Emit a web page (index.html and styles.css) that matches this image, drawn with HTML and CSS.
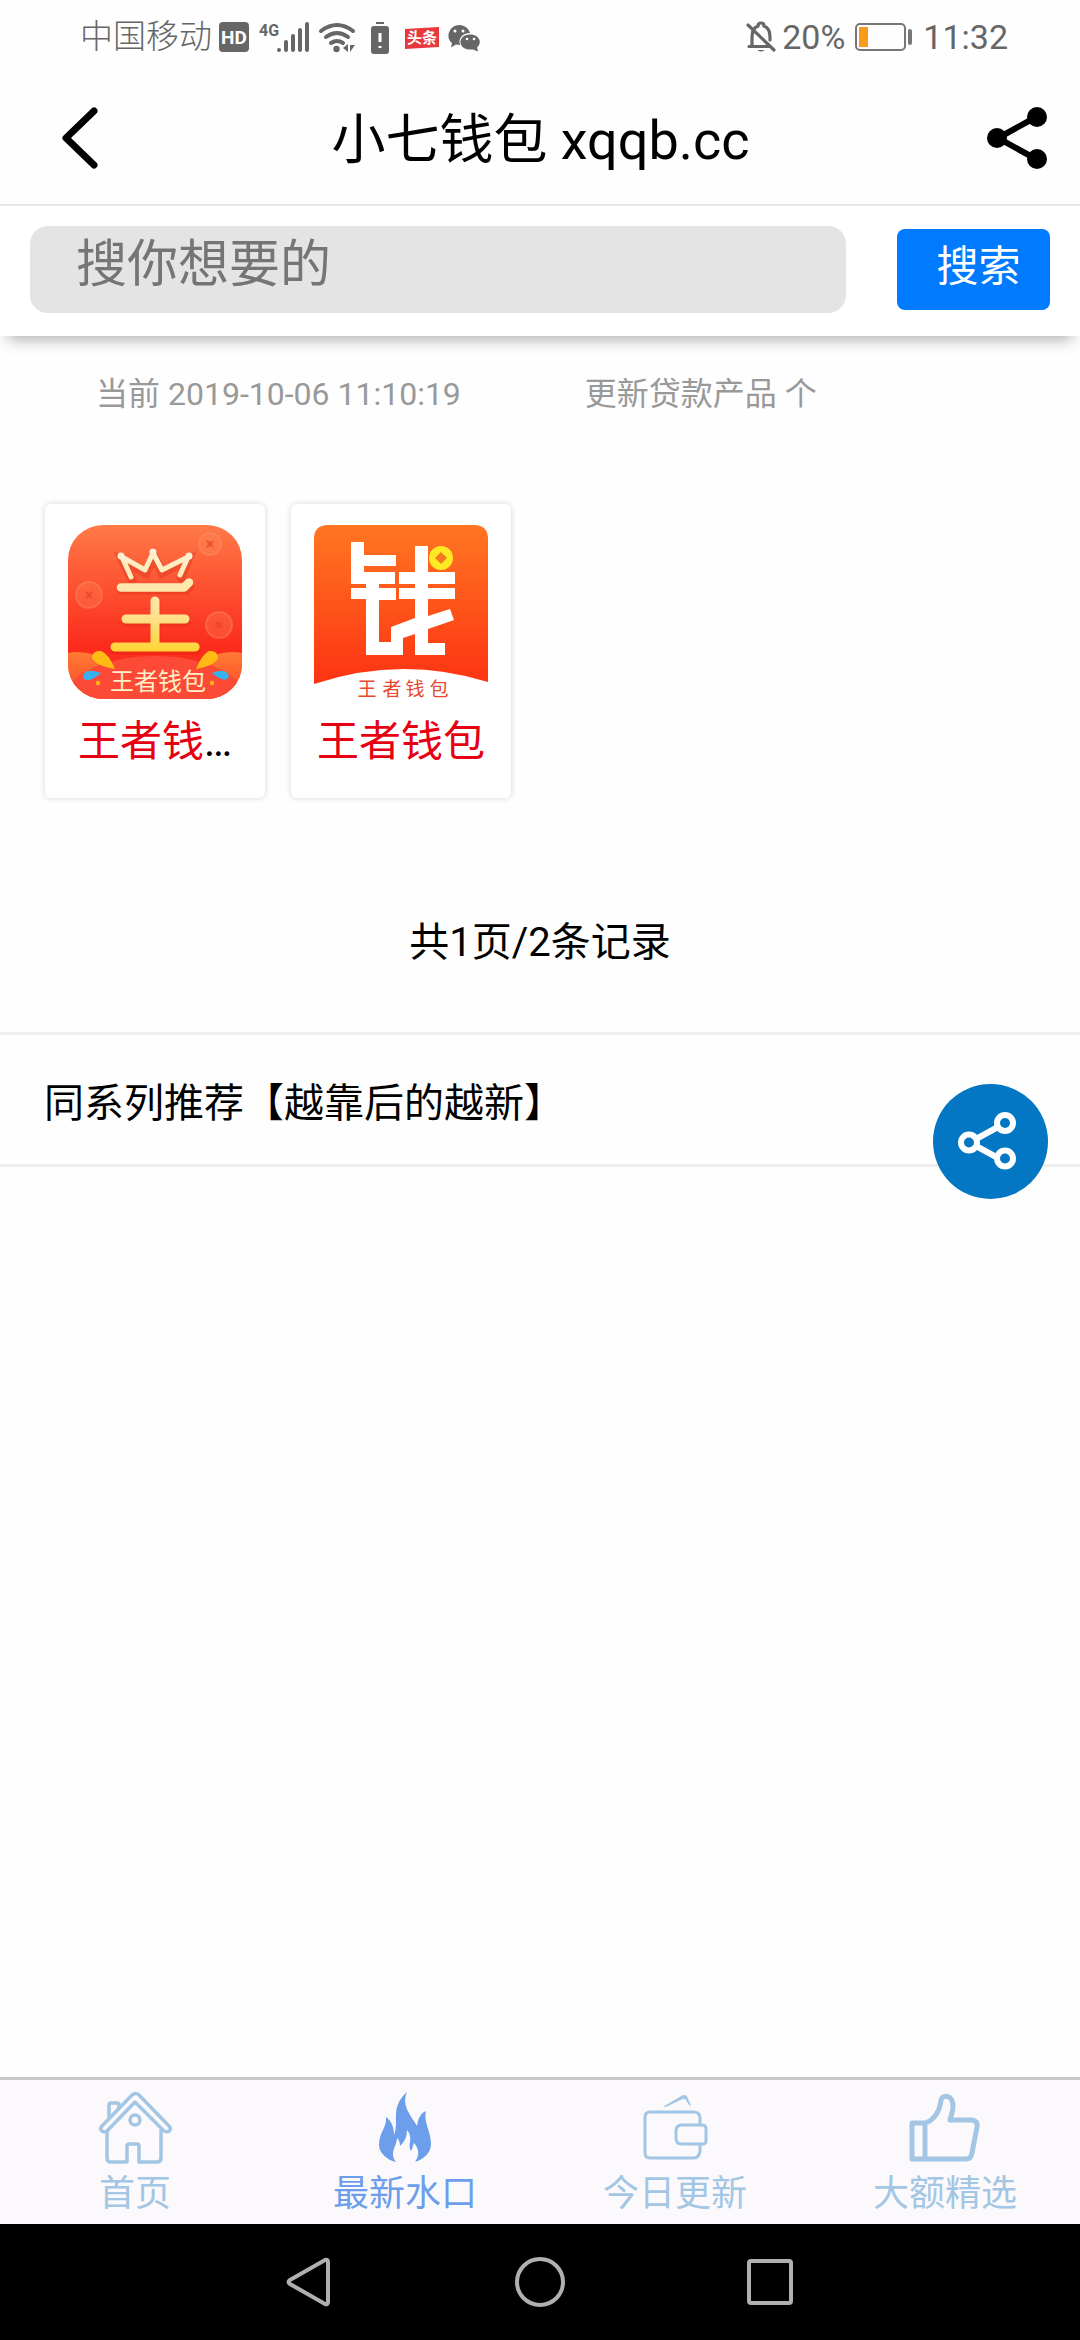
FILE: index.html
```html
<!DOCTYPE html>
<html lang="zh-CN">
<head>
<meta charset="utf-8">
<meta name="viewport" content="width=device-width, initial-scale=1">
<title>小七钱包 xqqb.cc</title>
<link rel="stylesheet" href="styles.css">
</head>
<body>
<div class="screen">
  <div class="status">
    <span class="status-carrier">中国移动</span>
    <svg class="status-icons" width="262" height="36" viewBox="218 18 262 36" aria-hidden="true">
      <rect x="219" y="21" width="30" height="30" rx="4" fill="#666"/>
      <text x="234" y="43" class="hd-text" text-anchor="middle">HD</text>
      <text x="259" y="35" class="net-text">4G</text>
      <g stroke="#666" stroke-width="4" stroke-linecap="round">
        <path d="M279 49v.1M286 41v8M293 35v14M300 29v20M307 23v26"/>
      </g>
      <g fill="none" stroke="#666" stroke-width="4" stroke-linecap="round">
        <path d="M321 30q16-12 32 0M326 36q11-8 22 0M331 42q6-4 12 0"/>
      </g>
      <circle cx="336.500" cy="48" r="3.200" fill="#666"/>
      <path d="M348 43v8l-5-4zM350 44h5l-5 7z" fill="#666"/>
      <path d="M376 21h8v2h-8zM374 25h12q3 0 3 3v22q0 3-3 3h-12q-3 0-3-3V28q0-3 3-3z" fill="#666"/>
      <path d="M380 32v9M380 45v2" stroke="#fff" stroke-width="3"/>
      <path d="M405 28l34-2v20l-34 2z" fill="#e8373d"/>
      <text x="422" y="42" class="news-text" text-anchor="middle">头条</text>
      <path d="M459 24c6 0 10 4 11 8-8 0-12 6-10 12l-4-.5-5 3 1-4.500c-8-7-1-18 7-18z" fill="#666"/>
      <path d="M470 33.500c-12 0-13 14-1 15h4l5 2-1-4c6-5 2-13-7-13z" fill="#666"/>
      <g fill="#fff"><circle cx="455" cy="30" r="1.500"/><circle cx="463" cy="30" r="1.500"/><circle cx="467" cy="38" r="1.300"/><circle cx="474" cy="38" r="1.300"/></g>
    </svg>
    <div class="status-right">
      <svg width="30" height="34" viewBox="748 19 30 34" fill="none" stroke="#666" stroke-width="3.200" aria-hidden="true">
        <path d="M754 45V36q0-9 6-11 0-3 3-3t3 3q6 2 6 11v3M751 45.500h20M750 24l26 25" stroke-linecap="round"/>
        <path d="M759.500 49h7q-3.500 3-7 0z" fill="#666" stroke="none"/>
      </svg>
      <span>20%</span>
      <svg class="battery" width="58" height="28" viewBox="0 0 58 28" aria-hidden="true">
        <rect x="1" y="1" width="49" height="26" rx="4" fill="none" stroke="#777" stroke-width="2"/>
        <rect x="4" y="4" width="9" height="20" fill="#f89b1c"/>
        <rect x="53" y="6" width="4" height="16" rx="2" fill="#777"/>
      </svg>
      <span>11:32</span>
    </div>
  </div>

  <header class="topbar">
    <button class="icon-btn" type="button" aria-label="返回">
      <svg width="36" height="64" viewBox="0 0 36 64" fill="none" stroke="#000" stroke-width="7" stroke-linecap="round" stroke-linejoin="round"><path d="M32 5L4 32l28 27"/></svg>
    </button>
    <h1 class="title">小七钱包 xqqb.cc</h1>
    <button class="icon-btn" type="button" aria-label="分享">
      <svg width="60" height="64" viewBox="0 0 60 64"><path d="M49 11L11 32l38 21" fill="none" stroke="#000" stroke-width="6"/><circle cx="50" cy="11" r="10"/><circle cx="10" cy="32" r="10"/><circle cx="50" cy="53" r="10"/></svg>
    </button>
  </header>

  <form class="search">
    <input class="search-input" type="search" placeholder="搜你想要的" aria-label="搜你想要的">
    <button class="search-btn" type="submit">搜索</button>
  </form>

  <main class="content">
    <p class="info"><span>当前 2019-10-06 11:10:19</span><span>更新贷款产品 个</span></p>

    <div class="cards">
      <a class="card" href="#">
        <svg class="card-icon" viewBox="0 0 174 174" aria-hidden="true">
          <defs>
            <linearGradient id="red" x1="0" y1="0" x2="0" y2="1"><stop offset="0" stop-color="#ff7a48"/><stop offset=".7" stop-color="#fb2b1c"/><stop offset="1" stop-color="#fa3a25"/></linearGradient>
            <linearGradient id="gold" gradientUnits="userSpaceOnUse" x1="0" y1="24" x2="0" y2="128"><stop offset="0" stop-color="#fff0cf"/><stop offset=".6" stop-color="#ffe298"/><stop offset="1" stop-color="#ffd42e"/></linearGradient>
            <linearGradient id="hill" x1="0" y1="0" x2="0" y2="1"><stop offset="0" stop-color="#ff7a34"/><stop offset="1" stop-color="#fb3123"/></linearGradient>
            <clipPath id="tile"><rect width="174" height="174" rx="35"/></clipPath>
          </defs>
          <g clip-path="url(#tile)">
            <rect width="174" height="174" fill="url(#red)"/>
            <g fill="#ff8a5c" fill-opacity=".3" stroke="#ff9a70" stroke-opacity=".35" stroke-width="2"><circle cx="142" cy="19" r="11"/><circle cx="21" cy="70" r="13"/><circle cx="151" cy="100" r="13"/></g>
            <g fill="#e2402a" fill-opacity=".65"><path d="M138 15l4 2 4-2-2 4 2 4-4-2-4 2 2-4zM17 66l4 2 4-2-2 4 2 4-4-2-4 2 2-4zM147 96l4 2 4-2-2 4 2 4-4-2-4 2 2-4z"/></g>
            <ellipse cx="10" cy="160" rx="42" ry="33" fill="url(#hill)"/><ellipse cx="164" cy="160" rx="42" ry="33" fill="url(#hill)"/>
            <ellipse cx="87" cy="176" rx="92" ry="45" fill="#fd4a36"/>
          </g>
          <g fill="none" stroke="#c9180c" stroke-opacity=".25" stroke-width="9" stroke-linecap="round" transform="translate(1 3)"><path d="M53 62h64l4-4M87 75v46M58 94h59M46 122h81M63 52l-9-19 23 12 8-17 8 17 26-13-7 18"/></g>
          <g fill="none" stroke="url(#gold)" stroke-linecap="round" stroke-linejoin="round"><path d="M53 62.500h63l5-5" stroke-width="8.500"/><path d="M87 76v44M58 94h59M47 122h80.100" stroke-width="9"/><path d="M63 52l-9-20 23 13 8-17 9 17 26-13-8 18" stroke-width="5"/></g>
          <g fill="#fff0d4"><circle cx="53" cy="31" r="3.500"/><circle cx="85" cy="27" r="3.500"/><circle cx="121" cy="31" r="3.500"/></g>
          <g fill="#ffba15"><path d="M47 144q-22-4-23-12 1-7 9-6 8 3 14 18zM128 144q6-15 13-18 8-1 9 6-1 8-22 12z"/><circle cx="30" cy="158" r="2.200"/><circle cx="144" cy="158" r="2.200"/></g>
          <path d="M33 148q-17-6-18 4 4 8 18-4zM144 148q15-6 17 4-4 7-17-4z" fill="#35b2ef"/>
          <text x="90" y="165" text-anchor="middle" class="logo-caption-gold">王者钱包</text>
        </svg>
        <span class="card-name">王者钱<span class="more">…</span></span>
      </a>
      <a class="card" href="#">
        <svg class="card-icon" viewBox="0 0 174 174" aria-hidden="true">
          <defs><linearGradient id="orange" x1="0" y1="0" x2="0" y2="1"><stop offset="0" stop-color="#ff7622"/><stop offset="1" stop-color="#fd3312"/></linearGradient></defs>
          <path d="M14 0h146q14 0 14 14v143q-87-27-174 2V14Q0 0 14 0z" fill="url(#orange)"/>
          <path d="M37 17h13v13h32v11H50v6h31v12H65v4h17v12H65v42h12v-15l24-9V74H85V63h16v-4H85V47h16V21h13v26h27v12h-27v4h27v11h-27v17l22-7 4 11-26 9v14h17v12h-30v-21l-12 4v17H52V74H37V63h15v-4H37z" fill="#fff"/>
          <circle cx="127" cy="33" r="12" fill="#fdea24"/><path d="M127 27l6 6-6 6-6-6z" fill="#f57c1c"/>
          <text y="171" text-anchor="middle" class="logo-caption-red"><tspan x="53">王</tspan><tspan x="78">者</tspan><tspan x="101">钱</tspan><tspan x="125">包</tspan></text>
        </svg>
        <span class="card-name">王者钱包</span>
      </a>
    </div>

    <p class="pages">共1页/2条记录</p>
    <h2 class="series">同系列推荐【越靠后的越新】</h2>
  </main>

  <button class="fab" type="button" aria-label="分享">
    <svg width="115" height="115" viewBox="0 0 115 115" fill="none" stroke="#fff" stroke-width="6"><path d="M65 43L43 55M43 62l22 12"/><circle cx="72" cy="39" r="8"/><circle cx="36" cy="58.500" r="8"/><circle cx="72" cy="74.500" r="8"/></svg>
  </button>

  <nav class="tabs">
    <a class="tab" href="#">
      <svg width="72" height="72" viewBox="0 0 72 72" fill="none" stroke="#a3c6e4" stroke-width="3.500" stroke-linejoin="round" aria-hidden="true"><path d="M8 38v28q0 4 4 4h16V54q0-2 2-2h8q2 0 2 2v16h18q4 0 4-4V38"/><path d="M8 39q-4 2-6-1-1-2 1-4L33 3q4-3 7 0l30 31q2 2 1 4-2 3-6 1L36 10z"/><path d="M10 26V13q0-2 2-2h6q2 0 2 2v3"/><circle cx="36" cy="28" r="5"/></svg>
      <span>首页</span>
    </a>
    <a class="tab tab-active" href="#">
      <svg width="72" height="72" viewBox="0 0 72 72" aria-hidden="true"><path d="M38 0c-4 9-1 16 3 23 2 4 5 7 7 11 1-8 4-13 9-15-3 11 5 20 5 33 0 9-7 15-16 18 4-6 5-12-1-19-1 3-2 6-3 8-4-7 3-13-4-21 0 8-3 12-7 16 0-4-1-6-3-8 0 8-8 14-1 24-9-2-17-9-17-17 0-13 8-17 7-28 5 4 8 9 8 18 6-13-5-27 13-43z" fill="#6d9eeb"/></svg>
      <span>最新水口</span>
    </a>
    <a class="tab" href="#">
      <svg width="72" height="72" viewBox="0 0 72 72" fill="none" stroke="#a3c6e4" stroke-width="3" stroke-linejoin="round" aria-hidden="true"><path d="M61 32v-7q-1-5-6-5H11q-5 0-5 5v36q0 5 5 5h44q5 0 6-7v-6"/><path d="M63 33H43q-6 0-6 6v7q0 6 6 6h20q4 0 4-3V37q0-4-4-4z"/><path d="M26 14.500L46 5l5 8-4-9-3 0z" fill="#a3c6e4" stroke-width="1.500"/></svg>
      <span>今日更新</span>
    </a>
    <a class="tab" href="#">
      <svg width="72" height="72" viewBox="0 0 72 72" fill="none" stroke="#a3c6e4" stroke-width="5" stroke-linejoin="round" aria-hidden="true"><path d="M3 31h13v36H3zM16 31c10-3 15-13 16-23 2-6 12-5 12 6 0 6-2 10-3 14h22q6 1 5 7l-5 26q-1 6-6 6H16"/></svg>
      <span>大额精选</span>
    </a>
  </nav>

  <div class="sysnav">
    <button type="button" aria-label="后退"><svg width="52" height="52" viewBox="0 0 52 52"><path d="M44 6v40q0 3-3 2L6 28q-3-2 0-4L41 4q3-1 3 2z"/></svg></button>
    <button type="button" aria-label="主屏幕"><svg width="52" height="52" viewBox="0 0 52 52"><circle cx="26" cy="26" r="23"/></svg></button>
    <button type="button" aria-label="最近任务"><svg width="52" height="52" viewBox="0 0 52 52"><rect x="5" y="5" width="42" height="42" rx="2"/></svg></button>
  </div>
</div>
</body>
</html>
```
FILE: styles.css
```css
* {
  box-sizing: border-box;
}

body {
  margin: 0;
  background: #fefefe;
  color: #000;
  font-family: Roboto, "Noto Sans CJK SC", sans-serif;
}

button {
  margin: 0;
  padding: 0;
  border: 0;
  background: none;
  font-family: inherit;
}

svg {
  display: block;
  overflow: visible;
}

a {
  color: inherit;
  text-decoration: none;
}

.screen {
  position: relative;
  display: flex;
  flex-direction: column;
  min-height: 100vh;
}

/* Status bar */
.status {
  display: flex;
  align-items: center;
  height: 74px;
  padding: 0 72px 0 80px;
  color: #666;
  font-size: 34px;
  line-height: 40px;
}

.status-carrier {
  font-size: 33px;
  font-weight: 300;
}

.status-icons {
  margin-left: 6px;
}

.status-right {
  display: flex;
  align-items: center;
  gap: 6px;
  margin-left: auto;
}

.battery {
  margin: 0 4px;
}

.hd-text {
  fill: #fff;
  font-size: 19px;
  font-weight: 700;
}

.net-text {
  fill: #666;
  font-size: 16px;
  font-weight: 700;
}

.news-text {
  fill: #fff;
  font-size: 15px;
  font-weight: 700;
}

/* Title bar */
.topbar {
  display: flex;
  align-items: center;
  justify-content: space-between;
  height: 132px;
  padding: 0 33px 2px 62px;
  border-bottom: 2px solid #e8e8e8;
}

.icon-btn {
  display: flex;
  width: 60px;
}

.title {
  margin: 0;
  padding: 6px 28px 0 0;
  font-size: 54px;
  font-weight: 400;
  line-height: 64px;
}

/* Search */
.search {
  display: flex;
  align-items: center;
  gap: 51px;
  height: 130px;
  padding: 0 30px 4px;
  background: #fff;
  box-shadow: 0 12px 14px -8px rgba(0, 0, 0, 0.3);
}

.search-input {
  flex: 1;
  min-width: 0;
  height: 87px;
  padding: 0 46px 10px;
  border: 0;
  border-radius: 18px;
  background: #e4e4e4;
  font-family: inherit;
  font-size: 51px;
  appearance: none;
}

.search-input::placeholder {
  color: #757575;
  opacity: 1;
}

.search-btn {
  width: 153px;
  height: 81px;
  padding: 0 0 14px 10px;
  border-radius: 8px;
  background: #007aff;
  color: #fff;
  font-size: 42px;
}

/* Content */
.content {
  flex: 1;
}

.info {
  display: flex;
  gap: 124px;
  margin: 0;
  padding: 37px 96px 0;
  color: #999;
  font-size: 32px;
  line-height: 42px;
}

.cards {
  display: grid;
  grid-template-columns: repeat(auto-fill, 220px);
  gap: 26px;
  padding: 89px 45px 0;
}

.card {
  display: flex;
  flex-direction: column;
  align-items: center;
  gap: 18px;
  padding: 21px 22px 31px;
  border-radius: 6px;
  background: #fff;
  box-shadow: 0 0 6px rgba(0, 0, 0, 0.16);
}

.card-icon {
  width: 174px;
  height: 174px;
}

.card-name {
  color: #e60012;
  font-size: 42px;
  line-height: 50px;
  white-space: nowrap;
}

.more {
  color: #000;
}

.logo-caption-gold {
  fill: #fff0c8;
  font-size: 24px;
}

.logo-caption-red {
  fill: #e8482e;
  font-size: 19px;
}

.pages {
  margin: 0;
  padding: 119px 0 63px;
  font-size: 40px;
  line-height: 52px;
  text-align: center;
}

.series {
  margin: 0;
  padding: 43px 44px 34px;
  border-top: 3px solid #eee;
  border-bottom: 3px solid #eee;
  font-size: 40px;
  font-weight: 400;
  line-height: 52px;
}

/* Floating share button */
.fab {
  position: absolute;
  top: 1084px;
  right: 32px;
  border-radius: 50%;
  background: #0477c4;
}

/* Bottom tabs */
.tabs {
  display: grid;
  grid-template-columns: repeat(4, 1fr);
  height: 147px;
  padding-top: 12px;
  border-top: 3px solid #c8c8c8;
  background: #fbf9fb;
  color: #a3c6e4;
}

.tab {
  display: flex;
  flex-direction: column;
  align-items: center;
  gap: 10px;
  font-size: 36px;
  line-height: 40px;
}

.tab-active {
  color: #6d9eeb;
}

/* System navigation */
.sysnav {
  display: flex;
  align-items: center;
  justify-content: center;
  gap: 178px;
  height: 116px;
  background: #000;
}

.sysnav svg {
  fill: none;
  stroke: #b0b0b0;
  stroke-width: 4px;
}
```
